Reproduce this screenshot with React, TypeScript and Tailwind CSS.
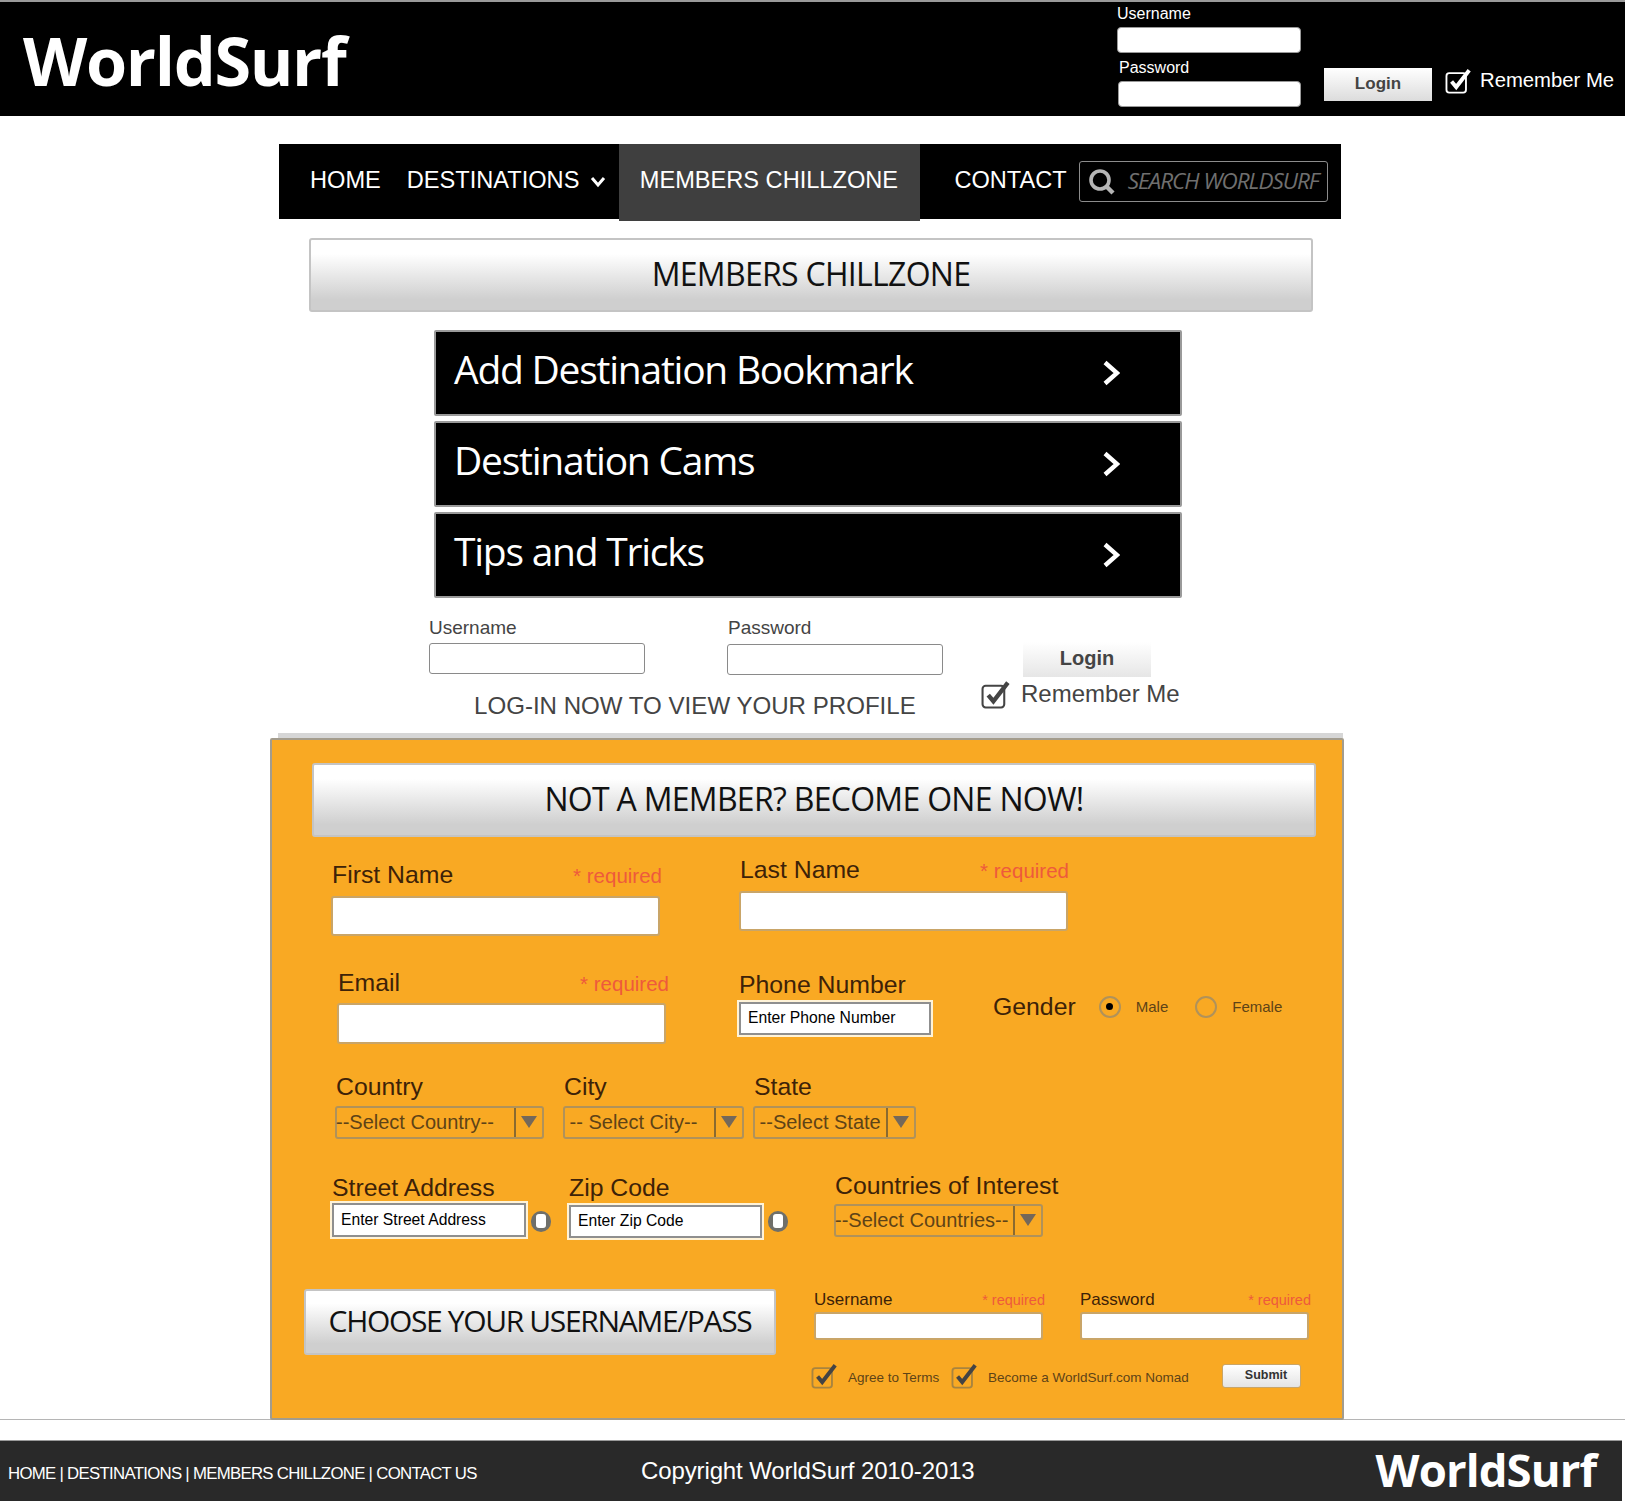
import React from 'react';

const sans = "font-['Liberation_Sans',Arial,sans-serif]";
const myriad = "font-['Open_Sans',sans-serif]";

function CheckBox({ className = '', box = '#ffffff', tick = '#ffffff' }: { className?: string; box?: string; tick?: string }) {
  return (
    <svg viewBox="0 0 30 28" className={className} fill="none">
      <rect x="1.5" y="5.5" width="21" height="21" rx="3" stroke={box} strokeWidth="2" />
      <path d="M7 14.5l5 6L26 2.5" stroke={tick} strokeWidth="4.2" />
    </svg>
  );
}

function Chevron() {
  return (
    <svg viewBox="0 0 18 26" className="h-[26px] w-[18px]" fill="none">
      <path d="M3 2.5L15 13 3 23.5" stroke="#fff" strokeWidth="4.4" />
    </svg>
  );
}

function GlossBar({ className, textClass = 'text-[32px] tracking-[-0.022em]', children }: { className: string; textClass?: string; children: React.ReactNode }) {
  return (
    <div className={`flex items-center justify-center whitespace-nowrap rounded-[3px] border-2 border-[#c4c4c4] bg-gradient-to-b from-white from-20% to-[#cfcfcf] to-85% pb-[3px] ${myriad} text-[#111] ${textClass} ${className}`}>
      {children}
    </div>
  );
}

function MenuRow({ label }: { label: string }) {
  return (
    <div className="ml-[434px] mb-[5px] flex h-[86px] w-[748px] items-center justify-between rounded-[2px] border-2 border-[#9a9a9a] bg-black pl-[18px] pr-[60px]">
      <span className={`${myriad} -mt-[7px] text-[39px] tracking-[-0.032em] text-white`}>{label}</span>
      <Chevron />
    </div>
  );
}

function Required({ className = 'text-[20.5px]' }: { className?: string }) {
  return <span className={`${className} text-[#ee5a3c]`}>* required</span>;
}

function TextField({ className }: { className: string }) {
  return <div className={`rounded-[3px] border-2 border-[#c9a568] bg-white ${className}`} />;
}

function Labeled({ label, className = '' }: { label: string; className?: string }) {
  return <div className={`h-[28px] text-[24.8px] leading-[28px] text-[#3d2208] ${className}`}>{label}</div>;
}

function Placeholder({ text, className }: { text: string; className: string }) {
  return (
    <div className={`flex items-center border-2 border-[#8f8f8f] bg-white pl-[7px] text-[15.7px] text-black outline outline-2 outline-[#fff3d8] ${className}`}>
      {text}
    </div>
  );
}

function SelectBox({ text, className }: { text: string; className: string }) {
  return (
    <div className={`flex h-[33px] items-center rounded-[3px] border-2 border-[#b0925a] text-[20px] text-[#5e4317] ${className}`}>
      <span className="-ml-[1px] flex-1 whitespace-nowrap">{text}</span>
      <span className="flex h-full w-[28px] shrink-0 items-center justify-center border-l-2 border-[#8a6a30]">
        <svg viewBox="0 0 16 12" className="h-[12px] w-[16px]">
          <path d="M0 0h16L8 12z" fill="#74685a" />
        </svg>
      </span>
    </div>
  );
}

function InfoDot() {
  return (
    <span className="flex h-[21px] w-[20px] items-center justify-center rounded-full bg-[#6f6f6a]">
      <span className="h-[14px] w-[10px] rounded-[3px] bg-white" />
    </span>
  );
}

export default function App() {
  return (
    <div className={`${sans} h-[1501px] w-[1625px] overflow-hidden bg-white`}>
      <header className="flex h-[116px] items-start border-t-2 border-[#9a9a9a] bg-black">
        <div className={`${myriad} ml-[23px] mt-[13px] w-[340px] text-[66.5px] font-bold leading-[90px] tracking-[-0.02em] text-white`}>WorldSurf</div>
        <div className="ml-[754px] w-[184px] text-[16px] text-white">
          <div className="mt-[3px] h-[18px] leading-[18px]">Username</div>
          <div className="mt-[4px] h-[26px] rounded-[4px] border border-[#999] bg-white" />
          <div className="mt-[6px] ml-[2px] h-[18px] leading-[18px]">Password</div>
          <div className="mt-[4px] ml-[1px] h-[26px] rounded-[4px] border border-[#999] bg-white" />
        </div>
        <div className="ml-[23px] mt-[66px] flex h-[33px] w-[108px] items-center justify-center bg-gradient-to-b from-white to-[#dcdcdc] pb-[2px] text-[17px] font-bold text-[#444]">Login</div>
        <CheckBox className="ml-[13px] mt-[66px] h-[26px] w-[28px]" />
        <div className="ml-[7px] mt-[64px] text-[20.3px] leading-[28px] text-white">Remember Me</div>
      </header>

      <nav className="ml-[279px] mt-[28px] flex h-[75px] w-[1062px] items-start bg-black text-[23.6px] text-white">
        <span className="ml-[31px] mt-[21px] leading-[30px]">HOME</span>
        <span className="ml-[26px] mt-[21px] leading-[30px]">DESTINATIONS</span>
        <svg viewBox="0 0 16 12" className="ml-[11px] mt-[32px] h-[12px] w-[16px]" fill="none">
          <path d="M2 2l6 7 6-7" stroke="#fff" strokeWidth="3" />
        </svg>
        <span className="ml-[13px] flex h-[77px] w-[301px] justify-center bg-[#3f3f3f] pr-[2px] pt-[21px] leading-[30px]">MEMBERS CHILLZONE</span>
        <span className="ml-[34px] mt-[21px] leading-[30px]">CONTACT</span>
        <div className="ml-[12px] mt-[17px] flex h-[41px] w-[249px] items-center rounded-[3px] border border-[#8c8c8c] pl-[8px]">
          <svg viewBox="0 0 28 28" className="h-[28px] w-[28px]" fill="none">
            <circle cx="12" cy="12" r="9" stroke="#b5b5b5" strokeWidth="3.6" />
            <path d="M18.5 18.5L25 25" stroke="#b5b5b5" strokeWidth="4.4" />
          </svg>
          <span className={`${myriad} -mt-[2px] ml-[12px] whitespace-nowrap text-[22.5px] italic tracking-[-0.045em] text-[#6f6f6f]`}>SEARCH WORLDSURF</span>
        </div>
      </nav>

      <GlossBar className="ml-[309px] mt-[19px] mb-[18px] h-[74px] w-[1004px]">MEMBERS CHILLZONE</GlossBar>

      <MenuRow label="Add Destination Bookmark" />
      <MenuRow label="Destination Cams" />
      <MenuRow label="Tips and Tricks" />

      <section className="ml-[429px] -mt-[6px] flex h-[136px] items-start text-[#444]">
        <div>
          <div className="flex">
            <div className="w-[216px]">
              <div className="mt-[20px] h-[22px] text-[19px] leading-[22px]">Username</div>
              <div className="mt-[4px] h-[31px] rounded-[3px] border border-[#8a8a8a]" />
            </div>
            <div className="ml-[82px] w-[216px]">
              <div className="mt-[20px] ml-[1px] h-[22px] text-[19px] leading-[22px]">Password</div>
              <div className="mt-[5px] h-[31px] rounded-[3px] border border-[#8a8a8a]" />
            </div>
          </div>
          <div className="ml-[45px] mt-[16px] h-[30px] whitespace-nowrap text-[24.1px] leading-[30px]">LOG-IN NOW TO VIEW YOUR PROFILE</div>
        </div>
        <div className="ml-[80px]">
          <div className="mt-[45px] flex h-[35px] w-[128px] items-center justify-center bg-gradient-to-b from-white to-[#e6e6e6] pb-[3px] text-[20px] font-bold">Login</div>
          <div className="-ml-[42px] mt-[2px] flex items-center">
            <CheckBox className="h-[29px] w-[31px]" box="#444" tick="#444" />
            <span className="ml-[9px] whitespace-nowrap text-[24px] leading-[30px]">Remember Me</span>
          </div>
        </div>
      </section>

      <div className="ml-[278px] h-[5px] w-[1065px] bg-[#d6d6d6]" />

      <div className="border-b border-[#b5b5b5]">
        <div className="ml-[270px] -mb-px h-[682px] w-[1074px] rounded-[2px] border-2 border-[#a39c8d] bg-[#f9a923]">
          <GlossBar className="ml-[40px] mt-[23px] h-[74px] w-[1004px]">NOT A MEMBER? BECOME ONE NOW!</GlossBar>

          <div className="ml-[60px] mt-[19px] flex items-start">
            <div className="mt-[5px] w-[330px]">
              <div className="flex justify-between">
                <Labeled label="First Name" />
                <Required />
              </div>
              <TextField className="-ml-[1px] mt-[4px] h-[40px] w-[329px]" />
            </div>
            <div className="ml-[78px] w-[329px]">
              <div className="flex justify-between">
                <Labeled label="Last Name" />
                <Required />
              </div>
              <TextField className="-ml-[1px] mt-[4px] h-[40px] w-[329px]" />
            </div>
          </div>

          <div className="ml-[66px] mt-[33px] flex items-start">
            <div className="w-[331px]">
              <div className="flex justify-between">
                <Labeled label="Email" />
                <Required />
              </div>
              <TextField className="-ml-[1px] mt-[3px] h-[41px] w-[329px]" />
            </div>
            <div className="ml-[70px] mt-[2px] w-[192px]">
              <Labeled label="Phone Number" />
              <Placeholder text="Enter Phone Number" className="mt-[3px] h-[33px]" />
            </div>
            <div className="ml-[62px] mt-[24px] flex items-center text-[#5e4317]">
              <Labeled label="Gender" />
              <span className="ml-[23px] flex h-[22px] w-[22px] items-center justify-center rounded-full border-2 border-[#b0925a]">
                <span className="h-[7px] w-[7px] rounded-full bg-black" />
              </span>
              <span className="ml-[15px] text-[15px]">Male</span>
              <span className="ml-[27px] h-[22px] w-[22px] rounded-full border-2 border-[#b0925a]" />
              <span className="ml-[15px] text-[15px]">Female</span>
            </div>
          </div>

          <div className="ml-[64px] mt-[29px] flex items-start">
            <div>
              <Labeled label="Country" />
              <SelectBox text="--Select Country--" className="-ml-[1px] mt-[5px] w-[209px]" />
            </div>
            <div className="ml-[20px]">
              <Labeled label="City" />
              <SelectBox text="&nbsp;-- Select City--" className="-ml-[1px] mt-[5px] w-[181px]" />
            </div>
            <div className="ml-[10px]">
              <Labeled label="State" />
              <SelectBox text="&nbsp;--Select State" className="-ml-[1px] mt-[5px] w-[163px]" />
            </div>
          </div>

          <div className="ml-[60px] mt-[33px] flex items-start">
            <div className="mt-[2px] w-[194px]">
              <Labeled label="Street Address" />
              <Placeholder text="Enter Street Address" className="mt-[1px] h-[34px]" />
            </div>
            <div className="ml-[5px] mt-[39px]"><InfoDot /></div>
            <div className="ml-[18px] mt-[2px] w-[193px]">
              <Labeled label="Zip Code" />
              <Placeholder text="Enter Zip Code" className="mt-[3px] h-[33px]" />
            </div>
            <div className="ml-[6px] mt-[39px]"><InfoDot /></div>
            <div className="ml-[47px]">
              <Labeled label="Countries of Interest" className="whitespace-nowrap" />
              <SelectBox text="--Select Countries--" className="-ml-[1px] mt-[4px] w-[209px]" />
            </div>
          </div>

          <div className="ml-[32px] mt-[48px] flex items-start">
            <GlossBar className="mt-[3px] h-[66px] w-[472px]" textClass="text-[30px] tracking-[-0.045em]">CHOOSE YOUR USERNAME/PASS</GlossBar>
            <div className="ml-[38px]">
              <div className="flex">
                <div className="w-[231px]">
                  <div className="mt-[2px] flex items-center justify-between text-[17px] leading-[24px] text-[#3d2208]">
                    Username
                    <Required className="text-[14.5px]" />
                  </div>
                  <TextField className="h-[28px] w-[229px]" />
                </div>
                <div className="ml-[35px] w-[231px]">
                  <div className="mt-[2px] flex items-center justify-between text-[17px] leading-[24px] text-[#3d2208]">
                    Password
                    <Required className="text-[14.5px]" />
                  </div>
                  <TextField className="h-[28px] w-[229px]" />
                </div>
              </div>
              <div className="-ml-[3px] mt-[23px] flex items-start text-[13.5px] text-[#5e4317]">
                <div className="flex h-[26px] w-[140px] items-center">
                  <CheckBox className="h-[26px] w-[28px]" box="#a8843f" tick="#444" />
                  <span className="ml-[9px] mt-[5px]">Agree to Terms</span>
                </div>
                <div className="flex h-[26px] w-[271px] items-center">
                  <CheckBox className="h-[26px] w-[28px]" box="#a8843f" tick="#444" />
                  <span className="ml-[9px] mt-[5px]">Become a WorldSurf.com Nomad</span>
                </div>
                <div className="mt-[1px] flex h-[24px] w-[79px] items-center justify-center rounded-[3px] border border-[#c9a568] bg-gradient-to-b from-white to-[#e4e4e4] pl-[9px] text-[12.5px] font-bold text-[#333]">Submit</div>
              </div>
            </div>
          </div>
        </div>
      </div>

      <footer className="mt-[20px] flex h-[62px] w-[1622px] items-start border-t border-[#9a9a9a] bg-[#292929] text-white">
        <div className="ml-[8px] mt-[22px] w-[470px] whitespace-nowrap text-[16.8px] leading-[22px] tracking-[-0.042em]">HOME | DESTINATIONS | MEMBERS CHILLZONE | CONTACT US</div>
        <div className="ml-[163px] mt-[16px] text-[24px] leading-[28px] tracking-[-0.005em]">Copyright WorldSurf 2010-2013</div>
        <div className={`${myriad} ml-[401px] mt-[-2px] text-[45.5px] font-bold leading-[60px] tracking-[-0.02em]`}>WorldSurf</div>
      </footer>
    </div>
  );
}
